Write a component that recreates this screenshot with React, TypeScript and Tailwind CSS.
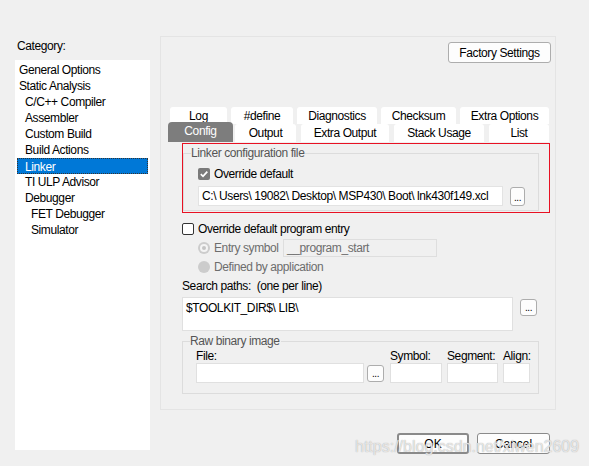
import React from 'react';

const categories = [
  { label: 'General Options', level: 0 },
  { label: 'Static Analysis', level: 0 },
  { label: 'C/C++ Compiler', level: 1 },
  { label: 'Assembler', level: 1 },
  { label: 'Custom Build', level: 1 },
  { label: 'Build Actions', level: 1 },
  { label: 'Linker', level: 1, selected: true },
  { label: 'TI ULP Advisor', level: 1 },
  { label: 'Debugger', level: 1 },
  { label: 'FET Debugger', level: 2 },
  { label: 'Simulator', level: 2 },
];

const backTabs = [
  { label: 'Log', w: 'w-[57px]' },
  { label: '#define', w: 'w-[62px]' },
  { label: 'Diagnostics', w: 'w-[80px]' },
  { label: 'Checksum', w: 'w-[75px]' },
  { label: 'Extra Options', w: 'w-[89px]' },
];

const indent = ['pl-[2px]', 'pl-[8px]', 'pl-[14px]'];

const BrowseButton: React.FC<{ className?: string }> = ({ className = '' }) => (
  <div
    className={`flex items-end justify-center rounded-[3px] border border-[#adadad] bg-[#fdfdfd] pb-[2px] text-[10px] leading-none ${className}`}
  >
    ...
  </div>
);

const GroupBox: React.FC<{ title: string; className?: string; children: React.ReactNode }> = ({
  title,
  className = '',
  children,
}) => (
  <div className={`relative border border-[#dcdcdc] ${className}`}>
    <span className="absolute -top-[8px] left-[7px] bg-[#f0f0f0] pr-[1px] leading-[15px] text-[#555]">{title}</span>
    {children}
  </div>
);

export default function App() {
  return (
    <div className="relative flex h-[466px] w-[589px] overflow-hidden bg-[#f0f0f0] font-['Liberation_Sans',Arial,sans-serif] text-[12px] tracking-[-0.4px] text-black">
      {/* Category column */}
      <div className="ml-[15px] flex w-[135px] flex-col">
        <div className="mt-[38px] h-[22px] pl-[2px] leading-[16px]">Category:</div>
        <div className="h-[390px] bg-white pt-[2px]">
          {categories.map((c) => (
            <div key={c.label} className="px-[2px]">
              <div
                className={`h-[16px] leading-[16px] ${indent[c.level]} ${
                  c.selected ? 'border border-dotted border-[#333] bg-[#0078d7] text-white leading-[14px]' : ''
                }`}
              >
                <span className={c.selected ? '-ml-[1px]' : ''}>{c.label}</span>
              </div>
            </div>
          ))}
        </div>
      </div>

      {/* Options panel */}
      <div className="ml-[10px] flex flex-col">
        <div className="mt-[36px] flex h-[374px] w-[396px] flex-col border border-[#e4e4e4]">
          <div className="mt-[5px] flex justify-end pr-[4px]">
            <div className="flex h-[21px] w-[103px] items-center justify-center rounded-[3px] border border-[#adadad] bg-[#fdfdfd]">
              Factory Settings
            </div>
          </div>

          {/* Tabs */}
          <div className="ml-[9px] mt-[44px] flex gap-[4px]">
            {backTabs.map((t) => (
              <div
                key={t.label}
                className={`flex h-[17px] items-center justify-center rounded-t-[3px] bg-white pt-[1px] ${t.w}`}
              >
                {t.label}
              </div>
            ))}
          </div>
          <div className="ml-[7px] -mt-[2px] flex items-end">
            <div className="flex h-[20px] w-[65px] items-center justify-center rounded-t-[4px] bg-[#7d7d7d] pb-[2px] text-white">
              Config
            </div>
            <div className="ml-[2px] flex h-[18px] w-[61px] items-center justify-center rounded-t-[3px] bg-white">
              Output
            </div>
            <div className="ml-[5px] flex h-[18px] w-[88px] items-center justify-center rounded-t-[3px] bg-white">
              Extra Output
            </div>
            <div className="ml-[5px] flex h-[18px] w-[90px] items-center justify-center rounded-t-[3px] bg-white">
              Stack Usage
            </div>
            <div className="ml-[5px] flex h-[18px] w-[60px] items-center justify-center rounded-t-[3px] bg-white">
              List
            </div>
          </div>

          {/* Page content */}
          <div className="ml-[21px] flex flex-col">
            <div className="mt-[1px] h-[70px] w-[368px] border border-[#e81123]">
              <GroupBox title="Linker configuration file" className="mt-[9px] h-[58px] w-[356px]">
                <div className="ml-[14px] mt-[14px] flex h-[12px] items-center">
                  <div className="flex h-[12px] w-[12px] items-center justify-center rounded-[2px] bg-[#7a7a7a]">
                    <svg width="10" height="10" viewBox="0 0 10 10">
                      <path d="M1.8 5.2 L4 7.3 L8.3 2.6" fill="none" stroke="white" strokeWidth="1.7" />
                    </svg>
                  </div>
                  <span className="ml-[4px]">Override default</span>
                </div>
                <div className="ml-[14px] mt-[6px] flex items-start">
                  <div className="flex h-[20px] w-[305px] items-center border border-[#e3e3e3] bg-white pl-[3px]">
                    C:\ Users\ 19082\ Desktop\ MSP430\ Boot\ lnk430f149.xcl
                  </div>
                  <BrowseButton className="ml-[7px] mt-[1px] h-[19px] w-[15px]" />
                </div>
              </GroupBox>
            </div>

            <div className="mt-[10px] flex h-[12px] items-center">
              <div className="h-[12px] w-[12px] rounded-[2px] border border-[#333] bg-white" />
              <span className="ml-[4px]">Override default program entry</span>
            </div>

            <div className="ml-[16px] mt-[4px] flex h-[18px] items-center">
              <div className="flex h-[12px] w-[12px] items-center justify-center rounded-full bg-[#cccccc]">
                <div className="flex h-[8px] w-[8px] items-center justify-center rounded-full bg-[#f4f4f4]">
                  <div className="h-[4px] w-[4px] rounded-full bg-[#c4c4c4]" />
                </div>
              </div>
              <span className="ml-[4px] w-[69px] text-[#6d6d6d]">Entry symbol</span>
              <div className="flex h-[18px] w-[154px] items-center border border-[#dedede] bg-[#f0f0f0] pl-[3px] text-[#6d6d6d]">
                __program_start
              </div>
            </div>

            <div className="ml-[16px] mt-[1px] flex h-[18px] items-center">
              <div className="h-[12px] w-[12px] rounded-full bg-[#cccccc]" />
              <span className="ml-[4px] text-[#6d6d6d]">Defined by application</span>
            </div>

            <div className="mt-[2px] h-[16px] leading-[16px]">Search paths:&nbsp; (one per line)</div>
            <div className="mt-[3px] flex items-start">
              <div className="h-[34px] w-[331px] border border-[#e0e0e0] bg-white pl-[3px] pt-[3px] leading-[15px]">
                $TOOLKIT_DIR$\ LIB\
              </div>
              <BrowseButton className="ml-[7px] mt-[2px] h-[17px] w-[17px]" />
            </div>

            <GroupBox title="Raw binary image" className="mt-[10px] h-[53px] w-[357px]">
              <div className="ml-[13px] mt-[7px] flex">
                <div className="flex flex-col">
                  <span className="h-[14px] leading-[14px]">File:</span>
                  <div className="flex items-start">
                    <div className="h-[20px] w-[168px] border border-[#e0e0e0] bg-white" />
                    <BrowseButton className="ml-[3px] mt-[2px] h-[17px] w-[17px]" />
                  </div>
                </div>
                <div className="ml-[6px] flex flex-col">
                  <span className="h-[14px] leading-[14px]">Symbol:</span>
                  <div className="h-[20px] w-[52px] border border-[#e0e0e0] bg-white" />
                </div>
                <div className="ml-[5px] flex flex-col">
                  <span className="h-[14px] leading-[14px]">Segment:</span>
                  <div className="h-[20px] w-[51px] border border-[#e0e0e0] bg-white" />
                </div>
                <div className="ml-[5px] flex flex-col">
                  <span className="h-[14px] leading-[14px]">Align:</span>
                  <div className="h-[20px] w-[27px] border border-[#e0e0e0] bg-white" />
                </div>
              </div>
            </GroupBox>
          </div>
        </div>

        {/* Dialog buttons */}
        <div className="mt-[23px] flex justify-end gap-[8px] pr-[6px]">
          <div className="flex h-[21px] w-[72px] items-center justify-center rounded-[3px] border-2 border-[#8a8a8a] bg-[#fdfdfd] tracking-normal">
            OK
          </div>
          <div className="flex h-[21px] w-[73px] items-center justify-center rounded-[3px] border border-[#8a8a8a] bg-[#fdfdfd] tracking-normal">
            Cancel
          </div>
        </div>
      </div>

      {/* Watermark */}
      <div className="pointer-events-none absolute left-[355px] top-[435px] text-[16px] tracking-normal text-white/70 [text-shadow:0_0_1px_#9a9a9a]">
        https://blog.csdn.net/xiwen2609
      </div>
    </div>
  );
}
